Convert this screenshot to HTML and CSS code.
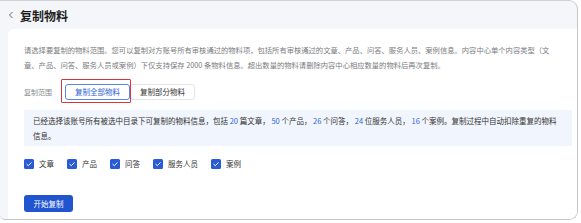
FILE: index.html
```html
<!doctype html>
<html>
<head>
<meta charset="utf-8">
<title>复制物料</title>
<link rel="stylesheet" href="styles.css">
</head>
<body>
<div class="window">
	<div class="header">
		<svg class="back" width="6" height="8" viewBox="0 0 6 8"><path d="M4.5 1 L1.5 4 L4.5 7" fill="none" stroke="#666" stroke-width="1"/></svg>
		<span class="title">复制物料</span>
	</div>
	<div class="card">
		<p class="desc">请选择要复制的物料范围。您可以复制对方账号所有审核通过的物料项，包括所有审核通过的文章、产品、问答、服务人员、案例信息。内容中心单个内容类型（文<br>章、产品、问答、服务人员或案例）下仅支持保存 2000 条物料信息。超出数量的物料请删除内容中心相应数量的物料后再次复制。</p>
		<div class="range">
			<span class="label">复制范围</span>
			<div class="seg">
				<span class="mark"><span class="seg-btn active">复制全部物料</span></span>
				<span class="seg-btn">复制部分物料</span>
			</div>
		</div>
		<div class="info">已经选择该账号所有被选中目录下可复制的物料信息，包括 <b>20</b> 篇文章， <b>50</b> 个产品， <b>26</b> 个问答， <b>24</b> 位服务人员， <b>16</b> 个案例。复制过程中自动扣除重复的物料信息。</div>
		<div class="checks">
			<label class="check"><span class="box"><svg width="10" height="10" viewBox="0 0 10 10"><path d="M2.6 5.1 L4.3 6.7 L7.5 3.4" fill="none" stroke="#fff" stroke-width="1"/></svg></span>文章</label>
			<label class="check"><span class="box"><svg width="10" height="10" viewBox="0 0 10 10"><path d="M2.6 5.1 L4.3 6.7 L7.5 3.4" fill="none" stroke="#fff" stroke-width="1"/></svg></span>产品</label>
			<label class="check"><span class="box"><svg width="10" height="10" viewBox="0 0 10 10"><path d="M2.6 5.1 L4.3 6.7 L7.5 3.4" fill="none" stroke="#fff" stroke-width="1"/></svg></span>问答</label>
			<label class="check"><span class="box"><svg width="10" height="10" viewBox="0 0 10 10"><path d="M2.6 5.1 L4.3 6.7 L7.5 3.4" fill="none" stroke="#fff" stroke-width="1"/></svg></span>服务人员</label>
			<label class="check"><span class="box"><svg width="10" height="10" viewBox="0 0 10 10"><path d="M2.6 5.1 L4.3 6.7 L7.5 3.4" fill="none" stroke="#fff" stroke-width="1"/></svg></span>案例</label>
		</div>
		<div class="actions">
			<span class="primary">开始复制</span>
		</div>
	</div>
</div>
</body>
</html>
```

FILE: styles.css
```css
	body{
		margin:0;
		background:#fff;
		font-family:"Noto Sans CJK SC","Noto Sans",sans-serif;
		}
	.window{
		width:577px;
		height:218px;
		border-top:1px solid #cfd0d4;
		border-right:1px solid #c4c5c9;
		border-bottom:1px solid #c4c5c9;
		border-radius:0 9px 9px 5px;
		background:#f5f6f9;
		overflow:hidden;
		display:flex;
		flex-direction:column;
		}
	.header{
		height:28px;
		display:flex;
		align-items:center;
		padding-left:8px;
		gap:6px;
		}
	.title{
		font-size:12px;
		font-weight:600;
		color:#1d1d1f;
		}
	.card{
		margin-left:8px;
		width:548px;
		flex:1;
		flex-shrink:0;
		background:#fff;
		border-radius:6px 0 0 0;
		padding:14px 16px 0 16px;
		}
	.desc{
		margin:0;
		font-size:7.3px;
		line-height:14.5px;
		color:#7a7c80;
		white-space:nowrap;
		}
	.range{
		display:flex;
		align-items:center;
		margin-top:12px;
		gap:13px;
		}
	.label{
		font-size:7px;
		color:#8a8c90;
		}
	.seg{
		display:flex;
		}
	.mark{
		position:relative;
		display:flex;
		}
	.mark::after{
		content:"";
		position:absolute;
		top:-5px;
		left:-4px;
		right:-1px;
		bottom:-3px;
		border:1px solid #d8363d;
		border-radius:1px;
		}
	.seg-btn{
		width:63px;
		height:14px;
		line-height:14px;
		text-align:center;
		font-size:7.5px;
		color:#333;
		border:1px solid #e3e5ea;
		border-radius:3px;
		}
	.seg-btn.active{
		color:#2e63d8;
		border-color:#5a86e4;
		}
	.info{
		margin-top:10px;
		background:#f1f5fd;
		padding:3px 10px 3px 9px;
		font-size:7.5px;
		line-height:15px;
		color:#333;
		}
	.info b{
		font-weight:normal;
		color:#2e63d8;
		}
	.checks{
		display:flex;
		gap:13px;
		margin-top:12px;
		}
	.check{
		display:flex;
		align-items:center;
		gap:5px;
		font-size:7.5px;
		color:#333;
		}
	.box{
		width:10px;
		height:10px;
		background:#2a5bd6;
		border-radius:1.5px;
		display:flex;
		}
	.actions{
		display:flex;
		margin-top:26px;
		}
	.primary{
		width:49px;
		height:17px;
		line-height:17px;
		text-align:center;
		font-size:7.5px;
		color:#fff;
		background:#2155cf;
		border-radius:3px;
		}
```
